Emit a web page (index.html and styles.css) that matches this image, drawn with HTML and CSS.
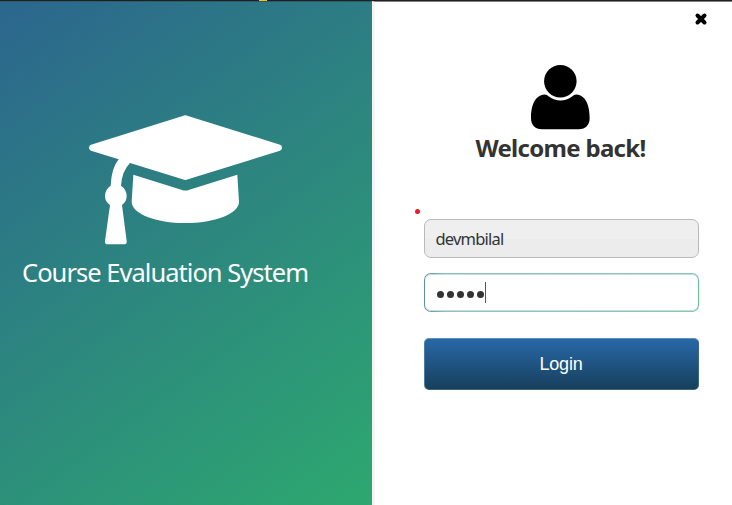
FILE: index.html
```html
<!DOCTYPE html>
<html lang="en">
<head>
<meta charset="utf-8">
<title>Course Evaluation System</title>
<link rel="stylesheet" href="styles.css">
</head>
<body>
<div class="window">
  <div class="edge"><i class="speck"></i></div>
  <main class="content">
    <section class="brand">
      <svg class="cap" viewBox="0 0 630 435" aria-hidden="true">
        <path d="M308 33Q316 29 324 33L600 119Q606 121 606 128Q606 134 600 137L324 223Q316 227 308 223L150 174Q126 198 123 242Q139 253 140 272Q140 290 126 300L140 408Q141 418 132 418H83Q74 418 75 408L90 300Q75 290 75 272Q76 253 92 242Q94 190 116 163L33 137Q27 134 27 128Q27 121 33 119Z"/>
        <path d="M160 209L304 254Q316 259 328 254L472 209L477 290C477 326 404 354 316 354S155 326 155 290Z"/>
      </svg>
      <h1 class="title">Course Evaluation System</h1>
    </section>
    <section class="login">
      <button class="close" aria-label="Close">
        <svg viewBox="0 0 14 14"><path d="M3.500 3.500L10.500 10.500M10.500 3.500L3.500 10.500"/></svg>
      </button>
      <svg class="user" viewBox="198 29 178 196" aria-hidden="true">
        <circle cx="286.500" cy="78" r="49"/>
        <path d="M239 118Q246 118 252 124C273 140 301 140 322 124Q328 118 335 118C365 121 375 154 375 189C375 210 363 223 342 223H231C210 223 198 210 198 189C198 154 208 121 239 118Z"/>
      </svg>
      <h2 class="welcome">Welcome back!</h2>
      <form class="form">
        <i class="required"></i>
        <div class="field username"><span>devmbilal</span></div>
        <div class="field password"><span class="dots"><i></i><i></i><i></i><i></i><i></i></span><i class="caret"></i></div>
        <button class="submit" type="button">Login</button>
      </form>
    </section>
  </main>
</div>
</body>
</html>
```

FILE: styles.css
```css
* { box-sizing: border-box; }
body { margin: 0; background: #fff; font-family: "Noto Sans", "DejaVu Sans", sans-serif; }
.window { width: 732px; height: 505px; display: flex; flex-direction: column; overflow: hidden; }
.edge { flex: none; height: 1px; background: #202020; }
.speck { display: block; width: 8px; height: 1px; margin-left: 259px; background: #f6c514; }
.content { flex: 1; display: flex; }
.brand {
  width: 372px;
  padding: 114px 0 0 22px;
  background: linear-gradient(143.6deg, #2c668e, #2da86f);
  border-top: 1px solid #285d70;
}
.cap { display: block; width: 210px; height: 145px; margin: -11px 0 0 58px; fill: #fff; }
.title { margin: 6px 0 0; font-size: 25.5px; line-height: 32px; font-weight: 400; color: #fff; white-space: nowrap; letter-spacing: -0.97px; }
.login {
  width: 360px;
  display: flex;
  flex-direction: column;
  align-items: center;
  border-left: 3px solid #f4f4f4;
  border-top: 1px solid #858085;
  padding-right: 1px;
}
.close { align-self: flex-end; width: 14px; height: 14px; margin: 10px 23px 0 0; padding: 0; border: 0; background: none; }
.close svg { display: block; width: 14px; height: 14px; fill: none; stroke: #000; stroke-width: 4; stroke-linecap: round; }
.user { display: block; width: 59px; height: 65px; margin: 39px 0 0 15px; }
.welcome { margin: 3px 0 0 15px; font-size: 24px; line-height: 30px; font-weight: 700; color: #333; white-space: nowrap; letter-spacing: -0.7px; }
.form { width: 285px; padding-left: 10px; margin: 46px 0 0 6px; }
.required { display: block; width: 5px; height: 5px; margin-left: -9px; border-radius: 50%; background: #ed1c24; }
.field { display: flex; align-items: center; width: 275px; height: 39px; padding-left: 11px; border: 1px solid #b9b9b9; border-radius: 7px; font-size: 16.5px; color: #333; }
.username { margin-top: 5px; background: linear-gradient(#efefef 50%, #ececec 50%); letter-spacing: -0.8px; }
.password {
  margin-top: 15px;
  border: 1.5px solid transparent;
  background: linear-gradient(#fff, #fff) padding-box, linear-gradient(90deg, #5b8eac, #94bfc1 8%, #92c2bd 60%, #8ac9ae 96%, #62bd93) border-box;
  box-shadow: inset 0 1px #c4dede, inset 0 -1px #c4dede;
}
.dots { display: flex; gap: 3px; margin: 3px 0 0 1px; }
.dots i { width: 7px; height: 7px; border-radius: 50%; background: #333; }
.caret { width: 1px; height: 21px; margin-left: 1px; background: #555; }
.submit {
  display: block; width: 275px; height: 52px; margin-top: 26px; padding: 0;
  border: 1px solid; border-color: #5c8fc2 #3c6580 #3c6579 #4c7ca0; border-radius: 5px;
  background: linear-gradient(#2868a8, #173f5c);
  color: #fff; font: 18px "Liberation Sans", Arial, sans-serif; letter-spacing: -0.2px;
}
```
